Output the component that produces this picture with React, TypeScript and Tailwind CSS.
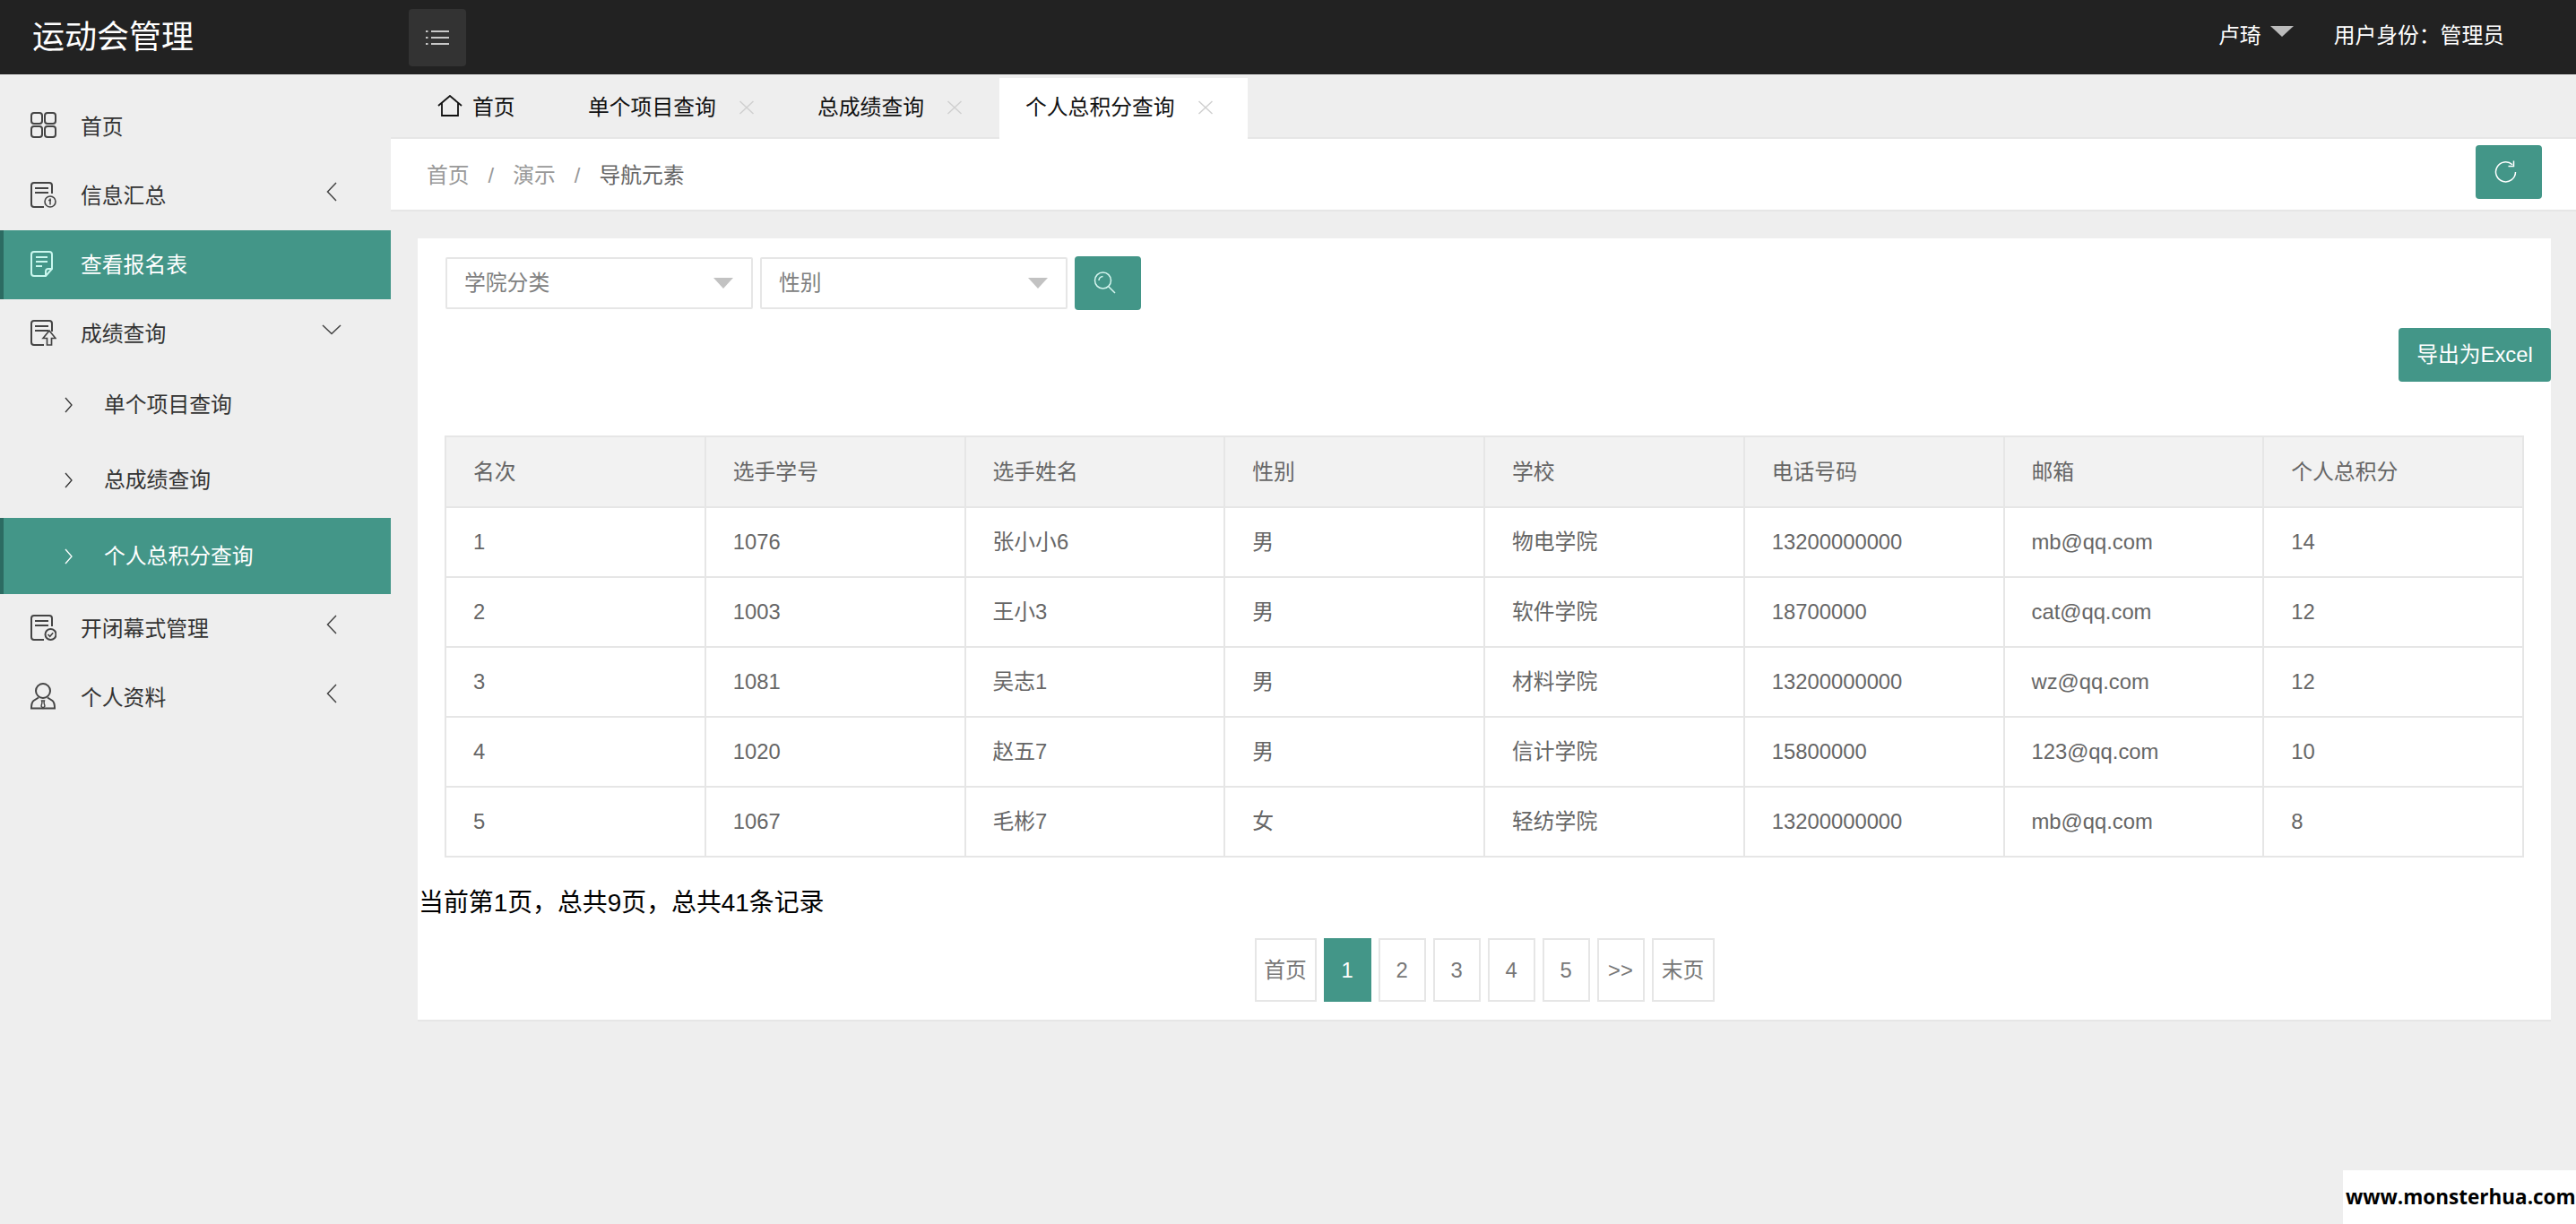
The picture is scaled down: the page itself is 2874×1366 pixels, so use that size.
import React from 'react';

type IconProps = { className?: string };

const rows = [
  ['1', '1076', '张小小6', '男', '物电学院', '13200000000', 'mb@qq.com', '14'],
  ['2', '1003', '王小3', '男', '软件学院', '18700000', 'cat@qq.com', '12'],
  ['3', '1081', '吴志1', '男', '材料学院', '13200000000', 'wz@qq.com', '12'],
  ['4', '1020', '赵五7', '男', '信计学院', '15800000', '123@qq.com', '10'],
  ['5', '1067', '毛彬7', '女', '轻纺学院', '13200000000', 'mb@qq.com', '8'],
];

const columns = ['名次', '选手学号', '选手姓名', '性别', '学校', '电话号码', '邮箱', '个人总积分'];

function GridIcon({ className }: IconProps) {
  return (
    <svg viewBox="0 0 30 30" fill="none" stroke="currentColor" strokeWidth="2" className={className}>
      <rect x="2" y="1" width="12" height="12" rx="3" />
      <rect x="17" y="1" width="12" height="12" rx="3" />
      <rect x="2" y="16" width="12" height="12" rx="3" />
      <rect x="17" y="16" width="12" height="12" rx="3" />
    </svg>
  );
}

function DocIcon({ className, badge }: IconProps & { badge: 'info' | 'plain' | 'up' | 'check' }) {
  return (
    <svg viewBox="0 0 30 30" fill="none" stroke="currentColor" strokeWidth="2" className={className}>
      {badge === 'plain' ? (
        <>
          <path d="M5 2h17a3 3 0 0 1 3 3v16l-7 8H5a3 3 0 0 1-3-3V5a3 3 0 0 1 3-3z" />
          <path d="M25 21h-4a3 3 0 0 0-3 3v5M7 8h13M7 13h13M7 18h7" />
        </>
      ) : (
        <>
          <path d="M25 14V5a3 3 0 0 0-3-3H5a3 3 0 0 0-3 3v21a3 3 0 0 0 3 3h11" />
          <path d="M6 8h15M6 13h15" />
        </>
      )}
      {badge === 'info' && (
        <>
          <circle cx="23" cy="23" r="6" fill="#eeeeee" strokeWidth="1.600" />
          <path d="M23 19.500v7M21 21.500h3" strokeWidth="1.500" />
        </>
      )}
      {badge === 'up' && <path d="M15 21.500 22 13l7 8.500h-4.500V29h-5v-7.500z" fill="#eeeeee" strokeWidth="1.700" />}
      {badge === 'check' && (
        <>
          <circle cx="23.500" cy="23" r="6" fill="#eeeeee" />
          <path d="m20.500 23 2.200 2.300 3.500-4" strokeWidth="1.600" />
        </>
      )}
    </svg>
  );
}

function PersonIcon({ className }: IconProps) {
  return (
    <svg viewBox="0 0 30 30" fill="none" stroke="currentColor" strokeWidth="2" className={className}>
      <circle cx="15" cy="9" r="8" />
      <path d="M10 16.500 4.500 20Q2 22 2 28.500h26q0-6.500-2.500-8.500L20 16.500" />
      <path d="M13.500 20h3l-.5 2 1 4-2 2.500-2-2.500 1-4z" strokeWidth="1.400" />
    </svg>
  );
}

function ChevronLeft({ className }: IconProps) {
  return (
    <svg viewBox="0 0 12 22" fill="none" stroke="currentColor" strokeWidth="1.500" className={className}>
      <path d="M11 1 1.500 11 11 21" />
    </svg>
  );
}

function ChevronDown({ className }: IconProps) {
  return (
    <svg viewBox="0 0 22 12" fill="none" stroke="currentColor" strokeWidth="1.500" className={className}>
      <path d="M1 1l10 9.500L21 1" />
    </svg>
  );
}

function ChevronRight({ className }: IconProps) {
  return (
    <svg viewBox="0 0 9 18" fill="none" stroke="currentColor" strokeWidth="1.300" className={className}>
      <path d="M1 1l7 8-7 8" />
    </svg>
  );
}

function CloseMark() {
  return (
    <svg viewBox="0 0 18 16" fill="none" stroke="#d0d0d0" strokeWidth="1.500" className="h-[16px] w-[18px] shrink-0">
      <path d="M1.500 1l15 14M16.500 1l-15 14" />
    </svg>
  );
}

function Caret({ className }: IconProps) {
  return <span className={`block h-0 w-0 border-x-[11px] border-t-[12px] border-x-transparent ${className ?? ''}`} />;
}

function NavItem({ icon, label, active, chevron }: { icon: React.ReactNode; label: string; active?: boolean; chevron?: 'left' | 'down' }) {
  return (
    <div
      className={
        active
          ? 'flex h-[77px] items-center border-l-4 border-[#2c6b62] bg-[#439688] pl-[29px] pr-[60px] text-white'
          : 'flex h-[77px] items-center pl-[33px] pr-[60px] text-[#333333]'
      }
    >
      {icon}
      <span className="ml-[27px]">{label}</span>
      {chevron === 'left' && <ChevronLeft className="mb-[10px] ml-auto h-[22px] w-[12px] text-[#444444]" />}
      {chevron === 'down' && <ChevronDown className="mb-[10px] -mr-[5px] ml-auto h-[12px] w-[22px] text-[#444444]" />}
    </div>
  );
}

function SubItem({ label, active }: { label: string; active?: boolean }) {
  return (
    <div
      className={
        active
          ? 'flex h-[85px] items-center border-l-4 border-[#2c6b62] bg-[#439688] pl-[68px] text-white'
          : 'flex h-[84px] items-center pl-[72px] text-[#333333]'
      }
    >
      <ChevronRight className="h-[18px] w-[9px]" />
      <span className="ml-[35px]">{label}</span>
    </div>
  );
}

function Sidebar() {
  const iconClass = 'mb-[3px] h-[30px] w-[30px] shrink-0 text-[#444444]';
  return (
    <aside className="w-[436px] shrink-0 pt-[20px]">
      <NavItem icon={<GridIcon className={iconClass} />} label="首页" />
      <NavItem icon={<DocIcon badge="info" className={iconClass} />} label="信息汇总" chevron="left" />
      <NavItem active icon={<DocIcon badge="plain" className="mb-[3px] h-[30px] w-[30px] shrink-0 text-[#c9f7ee]" />} label="查看报名表" />
      <NavItem icon={<DocIcon badge="up" className={iconClass} />} label="成绩查询" chevron="down" />
      <div className="-mt-px">
        <SubItem label="单个项目查询" />
        <SubItem label="总成绩查询" />
        <SubItem active label="个人总积分查询" />
      </div>
      <NavItem icon={<DocIcon badge="check" className={iconClass} />} label="开闭幕式管理" chevron="left" />
      <NavItem icon={<PersonIcon className={iconClass} />} label="个人资料" chevron="left" />
    </aside>
  );
}

function Tabs() {
  return (
    <div className="flex h-[72px] items-stretch border-b-2 border-[#e6e6e6] text-[#111111]">
      <div className="flex w-[191px] items-center pl-[52px] pt-[3px]">
        <svg viewBox="0 0 28 24" fill="none" stroke="currentColor" strokeWidth="1.800" className="mb-[4px] h-[24px] w-[28px]">
          <path d="M1 12 14 1l13 11M5 9v14h18V9" />
        </svg>
        <span className="ml-[11px]">首页</span>
      </div>
      <div className="flex w-[256px] items-center gap-[25px] pl-[29px] pt-[3px]">
        <span>单个项目查询</span>
        <CloseMark />
      </div>
      <div className="flex w-[232px] items-center gap-[25px] pl-[29px] pt-[3px]">
        <span>总成绩查询</span>
        <CloseMark />
      </div>
      <div className="-mb-[2px] mt-[4px] flex w-[277px] items-center gap-[25px] bg-white pl-[29px] pb-[2px]">
        <span>个人总积分查询</span>
        <CloseMark />
      </div>
    </div>
  );
}

function Breadcrumb() {
  return (
    <div className="flex h-[81px] items-center border-b-2 border-[#e6e6e6] bg-white pl-[40px] pr-[38px] pt-[2px] text-[#999999]">
      <span>首页</span>
      <span className="mx-[21px]">/</span>
      <span>演示</span>
      <span className="mx-[21px]">/</span>
      <span className="text-[#666666]">导航元素</span>
      <button className="mb-[7px] ml-auto flex h-[60px] w-[74px] items-center justify-center rounded-[4px] bg-[#439688]">
        <svg viewBox="0 0 28 28" fill="none" stroke="#ffffff" strokeWidth="1.500" className="mr-[6px] h-[28px] w-[28px]">
          <path d="M24.500 14A11 11 0 1 1 21 5.800" />
          <path d="M22.500 1.500v6h-6" />
        </svg>
      </button>
    </div>
  );
}

function SelectBox({ label, width }: { label: string; width: string }) {
  return (
    <div className={`flex h-[58px] items-center justify-between rounded-[2px] border-2 border-[#e6e6e6] pl-[19px] pr-[20px] text-[#808080] ${width}`}>
      <span>{label}</span>
      <Caret className="border-t-[#c2c2c2]" />
    </div>
  );
}

function DataTable() {
  return (
    <table className="ml-[30px] w-[2320px] table-fixed border-collapse text-[#666666]">
      <thead>
        <tr className="bg-[#f2f2f2]">
          {columns.map((col) => (
            <th key={col} className="h-[79px] border-2 border-[#e6e6e6] pl-[30px] text-left font-normal">
              {col}
            </th>
          ))}
        </tr>
      </thead>
      <tbody>
        {rows.map((row) => (
          <tr key={row[0]}>
            {row.map((cell, i) => (
              <td key={i} className="h-[78px] border-2 border-[#e6e6e6] pl-[30px]">
                {cell}
              </td>
            ))}
          </tr>
        ))}
      </tbody>
    </table>
  );
}

function Pagination() {
  const pages = ['2', '3', '4', '5', '>>'];
  const cell = 'flex h-[71px] items-center justify-center border-2 border-[#e6e6e6] text-[#777777]';
  return (
    <div className="mt-[19px] flex justify-center gap-[8px]">
      <span className={`${cell} w-[69px]`}>首页</span>
      <span className="flex h-[71px] w-[53px] items-center justify-center bg-[#439688] text-white">1</span>
      {pages.map((p) => (
        <span key={p} className={`${cell} w-[53px]`}>
          {p}
        </span>
      ))}
      <span className={`${cell} w-[70px]`}>末页</span>
    </div>
  );
}

export default function App() {
  return (
    <div className="relative h-[1366px] w-[2874px] overflow-hidden bg-[#eeeeee] font-['Liberation_Sans','Noto_Sans_CJK_SC',sans-serif] text-[23.800px] leading-[32px]">
      <header className="flex h-[83px] items-center bg-[#222222] text-white">
        <span className="ml-[36px] w-[420px] text-[36px] leading-[48px]">运动会管理</span>
        <button className="flex h-[64px] w-[64px] items-center justify-center rounded-[4px] bg-[#333333]">
          <svg viewBox="0 0 28 20" fill="none" stroke="#c8c8c8" strokeWidth="2" className="h-[20px] w-[28px]">
            <path d="M7 3h20M7 10h20M7 17h20" />
            <path d="M1 3h2.500M1 10h2.500M1 17h2.500" />
          </svg>
        </button>
        <div className="ml-auto flex items-center pb-[3px] pr-[80px]">
          <span className="ml-[2px]">卢琦</span>
          <Caret className="mb-[10px] ml-[10px] border-x-[13px] border-t-[#bbbbbb]" />
          <span className="ml-[45px]">用户身份：管理员</span>
        </div>
      </header>
      <div className="flex">
        <Sidebar />
        <main className="min-w-0 flex-1">
          <Tabs />
          <Breadcrumb />
          <section className="ml-[30px] mr-[28px] mt-[30px] h-[874px] border-b-2 border-[#e6e6e6] bg-white pt-[20px]">
            <div className="flex items-center gap-[8px] pl-[31px]">
              <SelectBox label="学院分类" width="w-[343px]" />
              <SelectBox label="性别" width="w-[343px]" />
              <button className="flex h-[60px] w-[74px] items-center justify-center rounded-[4px] bg-[#439688]">
                <svg viewBox="0 0 28 28" fill="none" stroke="#d6f5ef" strokeWidth="1.500" className="mr-[6px] h-[28px] w-[28px]">
                  <circle cx="11.500" cy="11" r="9" />
                  <path d="M7 11a4.500 4.500 0 0 1 4.500-4.500M18 18l7 7" />
                </svg>
              </button>
            </div>
            <div className="mt-[20px] flex justify-end">
              <button className="flex h-[60px] w-[170px] items-center justify-center rounded-[4px] bg-[#439688] text-white">
                导出为Excel
              </button>
            </div>
            <div className="mt-[60px]">
              <DataTable />
            </div>
            <div className="ml-px mt-[31px] h-[40px] text-[27.900px] leading-[40px] text-black">当前第1页，总共9页，总共41条记录</div>
            <Pagination />
          </section>
        </main>
      </div>
      <div className="absolute bottom-0 right-0 flex h-[60px] w-[260px] items-center bg-white pl-[3px] font-['Open_Sans','Noto_Sans',sans-serif] text-[22.500px] font-bold text-black">
        www.monsterhua.com
      </div>
    </div>
  );
}
